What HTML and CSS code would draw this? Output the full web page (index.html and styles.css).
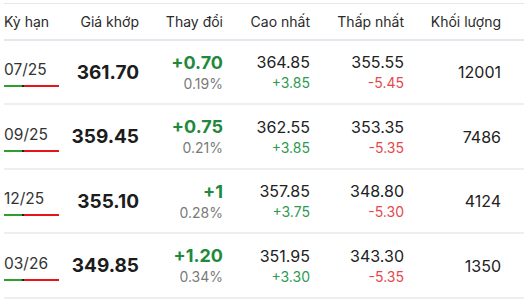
FILE: index.html
```html
<!DOCTYPE html>
<html lang="vi">
<head>
<meta charset="utf-8">
<link rel="stylesheet" href="styles.css">
</head>
<body>
<table class="quotes">
  <colgroup>
    <col class="c-term"><col class="c-price"><col class="c-chg"><col class="c-high"><col class="c-low"><col class="c-vol">
  </colgroup>
  <thead>
    <tr>
      <th class="left">Kỳ hạn</th>
      <th>Giá khớp</th>
      <th>Thay đổi</th>
      <th>Cao nhất</th>
      <th>Thấp nhất</th>
      <th class="vol">Khối lượng</th>
    </tr>
  </thead>
  <tbody>
    <tr>
      <td class="left"><div class="term">07/25</div><div class="bar"><span class="g"></span><span class="k"></span><span class="r"></span></div></td>
      <td><span class="price">361.70</span></td>
      <td><div class="chg">+0.70</div><div class="pct">0.19%</div></td>
      <td><div class="val">364.85</div><div class="up">+3.85</div></td>
      <td><div class="val">355.55</div><div class="down">-5.45</div></td>
      <td class="vol"><span class="val">12001</span></td>
    </tr>
    <tr>
      <td class="left"><div class="term">09/25</div><div class="bar"><span class="g"></span><span class="k"></span><span class="r"></span></div></td>
      <td><span class="price">359.45</span></td>
      <td><div class="chg">+0.75</div><div class="pct">0.21%</div></td>
      <td><div class="val">362.55</div><div class="up">+3.85</div></td>
      <td><div class="val">353.35</div><div class="down">-5.35</div></td>
      <td class="vol"><span class="val">7486</span></td>
    </tr>
    <tr>
      <td class="left"><div class="term">12/25</div><div class="bar"><span class="g"></span><span class="k"></span><span class="r"></span></div></td>
      <td><span class="price">355.10</span></td>
      <td><div class="chg">+1</div><div class="pct">0.28%</div></td>
      <td><div class="val">357.85</div><div class="up">+3.75</div></td>
      <td><div class="val">348.80</div><div class="down">-5.30</div></td>
      <td class="vol"><span class="val">4124</span></td>
    </tr>
    <tr>
      <td class="left"><div class="term">03/26</div><div class="bar"><span class="g"></span><span class="k"></span><span class="r"></span></div></td>
      <td><span class="price">349.85</span></td>
      <td><div class="chg">+1.20</div><div class="pct">0.34%</div></td>
      <td><div class="val">351.95</div><div class="up">+3.30</div></td>
      <td><div class="val">343.30</div><div class="down">-5.35</div></td>
      <td class="vol"><span class="val">1350</span></td>
    </tr>
  </tbody>
</table>
</body>
</html>
```

FILE: styles.css
```css
html, body {
  margin: 0;
  padding: 0;
  background: #ffffff;
}
body {
  font-family: Inter, "Noto Sans", sans-serif;
  color: #222;
  overflow: hidden;
}
.quotes {
  margin: 3px 0 0 4px;
  width: 520px;
  table-layout: fixed;
  border-collapse: collapse;
}
.c-term { width: 60px; }
.c-price { width: 75px; }
.c-chg { width: 84px; }
.c-high { width: 87px; }
.c-low { width: 94px; }
.c-vol { width: 120px; }

.quotes th,
.quotes td {
  padding: 0;
  text-align: right;
  vertical-align: middle;
}
.quotes th.left,
.quotes td.left { text-align: left; }
.quotes th.vol,
.quotes td.vol { padding-right: 23px; }

.quotes thead tr {
  border-top: 1px solid #e4e7eb;
  border-bottom: 2px solid #e4e7eb;
}
.quotes th {
  height: 35px;
  font-size: 14px;
  font-weight: 400;
  color: #2a2a2a;
}
.quotes tbody tr {
  border-bottom: 2px solid #eceef1;
}
.quotes tbody td {
  height: 62px;
}
.quotes tbody tr:nth-child(even) td {
  height: 63px;
}

.term {
  font-size: 15.5px;
  line-height: 20px;
  color: #333;
  padding-top: 3px;
}
.bar {
  display: flex;
  width: 55px;
  height: 2px;
  margin-top: 5px;
}
.bar .g { width: 18px; background: #2ba02d; }
.bar .k { width: 2px; background: #222; }
.bar .r { flex: 1; background: #e8141c; }

.price {
  font-size: 19px;
  font-weight: 700;
  color: #1c1c1c;
}
.chg {
  font-size: 18px;
  font-weight: 700;
  line-height: 23px;
  color: #1f8a3b;
}
.pct {
  font-size: 14px;
  line-height: 20px;
  color: #7a7a7a;
}
.val {
  font-size: 16px;
  line-height: 22px;
  color: #222;
}
.up {
  font-size: 14px;
  line-height: 20px;
  color: #2e9a4f;
}
.down {
  font-size: 14px;
  line-height: 20px;
  color: #e5484d;
}
```
